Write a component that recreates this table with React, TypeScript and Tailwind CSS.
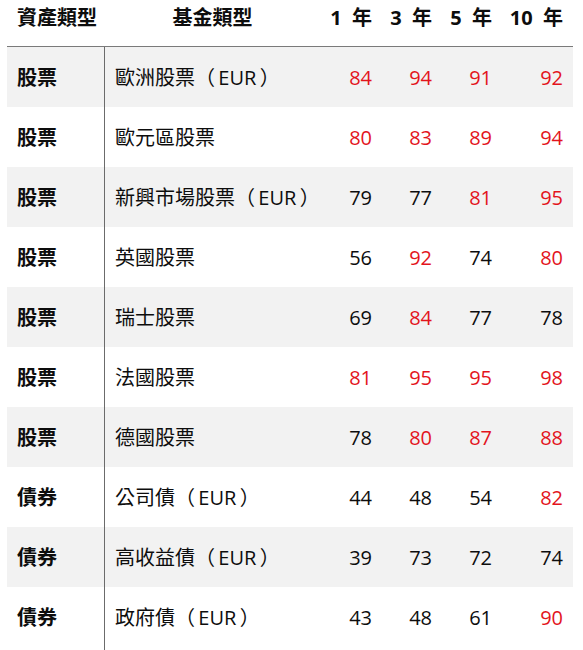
import React from "react";

type Row = {
  asset: string;
  fund: string;
  scores: [number, boolean][];
};

const rows: Row[] = [
  { asset: "股票", fund: "歐洲股票（\u2009EUR\u2009）", scores: [[84, true], [94, true], [91, true], [92, true]] },
  { asset: "股票", fund: "歐元區股票", scores: [[80, true], [83, true], [89, true], [94, true]] },
  { asset: "股票", fund: "新興市場股票（\u2009EUR\u2009）", scores: [[79, false], [77, false], [81, true], [95, true]] },
  { asset: "股票", fund: "英國股票", scores: [[56, false], [92, true], [74, false], [80, true]] },
  { asset: "股票", fund: "瑞士股票", scores: [[69, false], [84, true], [77, false], [78, false]] },
  { asset: "股票", fund: "法國股票", scores: [[81, true], [95, true], [95, true], [98, true]] },
  { asset: "股票", fund: "德國股票", scores: [[78, false], [80, true], [87, true], [88, true]] },
  { asset: "債券", fund: "公司債（\u2009EUR\u2009）", scores: [[44, false], [48, false], [54, false], [82, true]] },
  { asset: "債券", fund: "高收益債（\u2009EUR\u2009）", scores: [[39, false], [73, false], [72, false], [74, false]] },
  { asset: "債券", fund: "政府債（\u2009EUR\u2009）", scores: [[43, false], [48, false], [61, false], [90, true]] },
];

const cols = "grid grid-cols-[98px_215px_60px_60px_60px_73px]";
const numPad = ["pr-2", "pr-2", "pr-2", "pr-[10px]"];

export default function App() {
  return (
    <div
      className="w-[583px] h-[650px] bg-white text-[20px] text-[#0d0d0d] overflow-hidden pl-[7px]"
      style={{ fontFamily: '"Open Sans", "Noto Sans CJK TC", sans-serif' }}
    >
      <div className="w-[566px]">
        <div className={`${cols} h-[47px] pb-[10px] items-center font-bold border-b border-[#7a7a7a]`}>
          <div className="pl-[10px]">資產類型</div>
          <div className="text-center">基金類型</div>
          <div className="text-right pr-2">1&nbsp; 年</div>
          <div className="text-right pr-2">3&nbsp; 年</div>
          <div className="text-right pr-2">5&nbsp; 年</div>
          <div className="text-right pr-[10px]">10&nbsp; 年</div>
        </div>
        {rows.map((r, i) => (
          <div key={i} className={`${cols} h-[60px] ${i % 2 === 0 ? "bg-[#f2f2f2]" : "bg-white"}`}>
            <div className="pl-[10px] pt-[2px] font-bold flex items-center border-r border-[#6b6b6b]">{r.asset}</div>
            <div className="pl-[10px] pt-[2px] flex items-center whitespace-nowrap">{r.fund}</div>
            {r.scores.map(([v, hi], j) => (
              <div
                key={j}
                className={`pt-[2px] flex items-center justify-end ${numPad[j]} ${hi ? "text-[#e3141c]" : ""}`}
              >
                {v}
              </div>
            ))}
          </div>
        ))}
        <div className="w-[98px] h-[10px] border-r border-[#6b6b6b]" />
      </div>
    </div>
  );
}
